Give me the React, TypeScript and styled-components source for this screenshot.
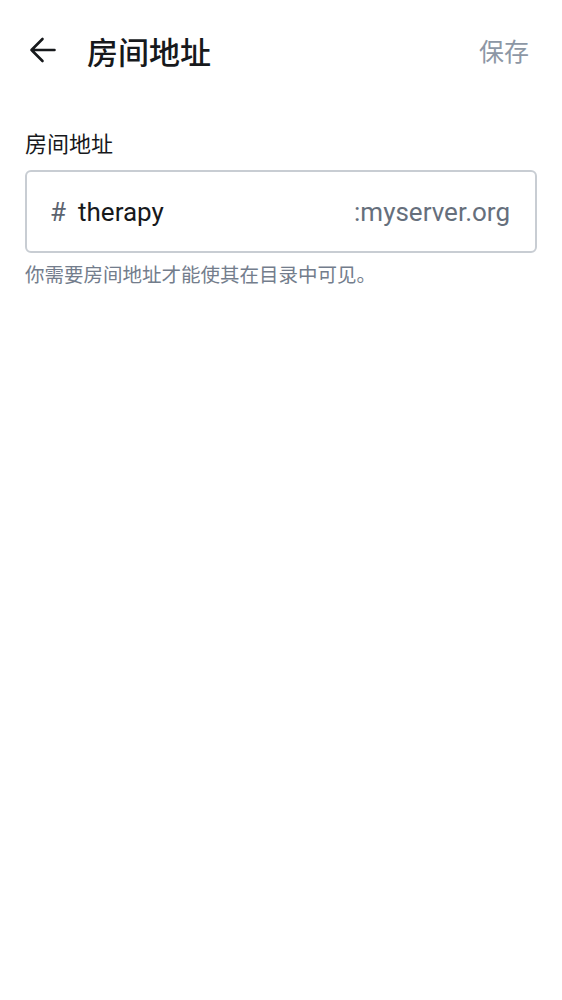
import styled, { createGlobalStyle } from "styled-components";

const GlobalStyle = createGlobalStyle`
  body {
    margin: 0;
    background: #ffffff;
    font-family: Roboto, "Noto Sans CJK SC", sans-serif;
  }
`;

export default function App() {
  return (
    <>
      <GlobalStyle />
      <Page>
        <Header>
          <BackButton aria-label="back">
            <svg width="28" height="28" viewBox="0 0 28 28" fill="none">
              <path
                d="M25.5 14H2.5M13.5 3L2.5 14L13.5 25"
                stroke="#17191c"
                strokeWidth="2.6"
                strokeLinecap="round"
                strokeLinejoin="round"
              />
            </svg>
          </BackButton>
          <Title>房间地址</Title>
          <SaveButton>保存</SaveButton>
        </Header>
        <Form>
          <Label>房间地址</Label>
          <Field>
            <Hash>#</Hash>
            <LocalPart>therapy</LocalPart>
            <Domain>:myserver.org</Domain>
          </Field>
          <Helper>你需要房间地址才能使其在目录中可见。</Helper>
        </Form>
      </Page>
    </>
  );
}

const Page = styled.div`
  min-height: 1000px;
  background: #ffffff;
`;

const Header = styled.header`
  display: flex;
  align-items: center;
  height: 100px;
  padding: 0 33px 0 29px;
  box-sizing: border-box;
`;

const BackButton = styled.button`
  display: flex;
  align-items: center;
  justify-content: center;
  padding: 0;
  border: none;
  background: none;
`;

const Title = styled.h1`
  flex: 1;
  margin: 0 0 0 30px;
  font-family: "Noto Sans CJK SC", sans-serif;
  font-size: 31px;
  font-weight: 500;
  color: #17191c;
`;

const SaveButton = styled.button`
  padding: 0;
  border: none;
  background: none;
  font-family: "Noto Sans CJK SC", sans-serif;
  font-size: 25px;
  color: #8d97a5;
`;

const Form = styled.div`
  display: flex;
  flex-direction: column;
  padding: 26px 25px 0;
`;

const Label = styled.label`
  font-family: "Noto Sans CJK SC", sans-serif;
  font-size: 22px;
  line-height: 32px;
  color: #17191c;
`;

const Field = styled.div`
  display: flex;
  align-items: center;
  margin-top: 12px;
  height: 83px;
  box-sizing: border-box;
  padding: 0 25px 0 24px;
  border: 2px solid #c8cdd3;
  border-radius: 6px;
  font-size: 26px;
`;

const Hash = styled.span`
  color: #5c6470;
  margin-right: 12px;
  margin-left: -1px;
`;

const LocalPart = styled.span`
  flex: 1;
  color: #17191c;
`;

const Domain = styled.span`
  color: #666f7c;
`;

const Helper = styled.p`
  margin: 9px 0 0;
  font-family: "Noto Sans CJK SC", sans-serif;
  font-size: 19.5px;
  line-height: 24px;
  color: #737d8c;
`;
